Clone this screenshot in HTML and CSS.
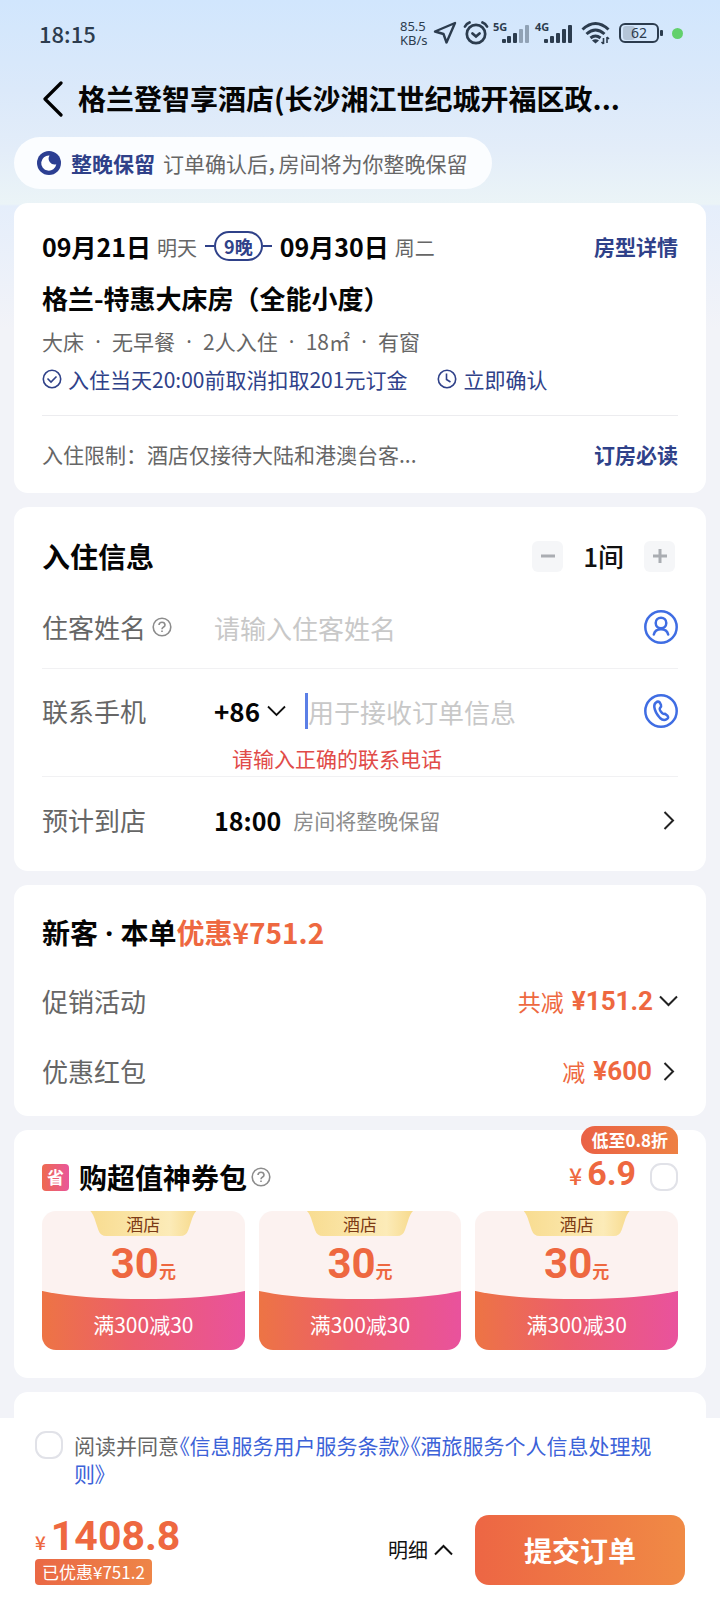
FILE: index.html
```html
<!DOCTYPE html>
<html lang="zh-CN">
<head>
<meta charset="utf-8">
<meta name="viewport" content="width=device-width, initial-scale=1">
<title>提交订单</title>
<link rel="stylesheet" href="styles.css">
</head>
<body>
<div class="statusbar">
  <span class="clock">18:15</span>
  <div class="indicators">
    <span class="speed"><span>85.5</span><span>KB/s</span></span>
    <svg width="24" height="24" viewBox="0 0 24 24" fill="none" stroke="#2c3c4e" stroke-width="2.4" stroke-linejoin="round"><path d="M22 2 13.500 21.500 10.500 13 2 10.500Z"/></svg>
    <svg class="alarm" width="26" height="24" viewBox="0 0 26 24" fill="none" stroke="#2c3c4e" stroke-width="2.700" stroke-linecap="round"><circle cx="13" cy="13" r="9.200"/><path d="M9.500 12.500l3.500 3 3.500-3M2 5.500Q3.500 2.500 6.500 1.500M24 5.500Q22.500 2.500 19.500 1.500"/></svg>
    <svg class="signal" width="38" height="24" viewBox="0 0 38 24" fill="#2c3c4e"><text class="net" x="0" y="10">5G</text><rect x="9" y="18" width="4" height="4" rx="1"/><rect x="14" y="15" width="4" height="7" rx="1"/><rect x="20" y="12" width="4" height="10" rx="1"/><g opacity=".4"><rect x="26" y="8" width="4" height="14" rx="1"/><rect x="32" y="4" width="4" height="18" rx="1"/></g></svg>
    <svg class="signal" width="38" height="24" viewBox="0 0 38 24" fill="#2c3c4e"><text class="net" x="0" y="10">4G</text><rect x="9" y="18" width="4" height="4" rx="1"/><rect x="15" y="15" width="4" height="7" rx="1"/><rect x="21" y="12" width="4" height="10" rx="1"/><rect x="27" y="8" width="4" height="14" rx="1"/><rect x="33" y="4" width="4" height="18" rx="1"/></svg>
    <svg class="wifi" width="30" height="24" viewBox="0 0 30 24" fill="none" stroke="#2c3c4e" stroke-width="3"><path d="M1.500 8.500Q14.500-3.500 27.500 8.500M5.500 13Q14.500 5 23.500 13M9.500 17Q14.500 13 19.500 17"/><path d="M14.500 22.500 11 19.500Q14.500 17 18 19.500Z" fill="#2c3c4e" stroke="none"/><path d="M22.500 17v6M22.500 23l-2-2M26 22v-6M26 16l2 2" stroke-width="1.600"/></svg>
    <svg class="battery" width="44" height="20" viewBox="0 0 44 20"><rect x="4" y="3" width="12" height="14" rx="3" fill="#b4c5d8"/><rect x="1" y="1" width="38" height="18" rx="5" fill="none" stroke="#2c3c4e" stroke-width="2"/><rect x="41" y="7" width="3" height="6" rx="1" fill="#2c3c4e"/><text class="charge" x="20" y="15" text-anchor="middle">62</text></svg>
    <span class="live"></span>
  </div>
</div>

<header class="titlebar">
  <button class="back" type="button" aria-label="返回"><svg width="22" height="36" viewBox="0 0 22 36" fill="none" stroke="#000" stroke-width="3.200" stroke-linecap="round" stroke-linejoin="round"><path d="M19 2 3 18 19 34"/></svg></button>
  <h1>格兰登智享酒店(长沙湘江世纪城开福区政...</h1>
</header>

<main>
  <div class="notice">
    <svg width="24" height="24" viewBox="0 0 24 24"><circle cx="12" cy="12" r="12" fill="#2c3f92"/><path d="M12.500 4.500A6 6 0 0 0 19.300 13.300 7.600 7.600 0 1 1 12.500 4.500Z" fill="#fff"/></svg>
    <strong>整晚保留</strong><span>订单确认后，房间将为你整晚保留</span>
  </div>

  <section class="card stay">
    <div class="dates">
      <b>09月21日</b><span class="day">明天</span>
      <span class="nights"><span>9晚</span></span>
      <b>09月30日</b><span class="day">周二</span>
      <a class="more" href="#room">房型详情</a>
    </div>
    <h2 class="room">格兰-特惠大床房（全能小度）</h2>
    <div class="facts"><span>大床</span><i>·</i><span>无早餐</span><i>·</i><span>2人入住</span><i>·</i><span>18㎡</span><i>·</i><span>有窗</span></div>
    <div class="policies">
      <span><svg width="20" height="20" viewBox="0 0 20 20" fill="none" stroke="#2f4189" stroke-width="1.600"><circle cx="10" cy="10" r="8.700"/><path d="M5.500 9.500 9 13l5.500-5.500"/></svg>入住当天20:00前取消扣取201元订金</span>
      <span><svg width="20" height="20" viewBox="0 0 20 20" fill="none" stroke="#2f4189" stroke-width="1.600"><circle cx="10" cy="10" r="8.700"/><path d="M9.500 4.500V10.500L13.500 13"/></svg>立即确认</span>
    </div>
    <div class="limits"><span>入住限制：酒店仅接待大陆和港澳台客...</span><a class="more" href="#rules">订房必读</a></div>
  </section>

  <section class="card guest">
    <div class="guest-head">
      <h2>入住信息</h2>
      <div class="stepper">
        <button type="button" aria-label="减少"><svg width="14" height="14" viewBox="0 0 14 14" stroke="#aaadb2" stroke-width="3"><path d="M0 7h14"/></svg></button>
        <output>1间</output>
        <button type="button" aria-label="增加"><svg width="14" height="14" viewBox="0 0 14 14" stroke="#aaadb2" stroke-width="3"><path d="M0 7h14M7 0v14"/></svg></button>
      </div>
    </div>
    <div class="field">
      <label for="guest">住客姓名<svg class="help" width="20" height="20" viewBox="0 0 20 20" fill="none" stroke="#8c8c8c" stroke-width="1.600"><circle cx="10" cy="10" r="8.800"/><path d="M7 8Q7.200 5.200 10 5.200T13 7.900Q13 9.300 11.300 10.200 10 10.900 10 12.200M10 13.400V15"/></svg></label>
      <input id="guest" type="text" placeholder="请输入住客姓名">
      <button class="pick" type="button" aria-label="选择住客"><svg width="34" height="34" viewBox="0 0 34 34" fill="none" stroke="#3f6de3" stroke-width="2.500" stroke-linecap="round"><circle cx="17" cy="17" r="15.700"/><circle cx="17" cy="13" r="5.300"/><path d="M9.800 24.500Q11 19.300 17 19.300T24.200 24.500"/></svg></button>
    </div>
    <div class="phone">
      <div class="field-main">
        <label for="phone">联系手机</label>
        <button class="code" type="button">+86<svg width="19" height="12" viewBox="0 0 19 12" fill="none" stroke="#111" stroke-width="1.800"><path d="M1 1.500 9.500 10 18 1.500"/></svg></button>
        <span class="caret"></span>
        <input id="phone" type="tel" placeholder="用于接收订单信息">
        <button class="pick" type="button" aria-label="通讯录"><svg width="34" height="34" viewBox="0 0 34 34" fill="none" stroke="#3f6de3" stroke-width="2.500" stroke-linejoin="round"><circle cx="17" cy="17" r="15.700"/><path d="M12 8.500Q14 6.800 15.800 8.500L17 11Q17.600 12.500 16 14 14.800 15.500 18.200 19.200 19.300 20.300 21 19.800L23.500 21.800Q25 23.800 23 25 19.500 27.300 16 24 11 18.500 10.300 13 10 10 12 8.500Z"/></svg></button>
      </div>
      <p class="error">请输入正确的联系电话</p>
    </div>
    <div class="arrival">
      <span class="label">预计到店</span><b>18:00</b><span class="hint">房间将整晚保留</span>
      <svg class="go" width="12" height="19" viewBox="0 0 12 19" fill="none" stroke="#222" stroke-width="2"><path d="M1.500 1 10 9.500 1.500 18"/></svg>
    </div>
  </section>

  <section class="card promo">
    <h2>新客<i> · </i>本单<em>优惠¥751.2</em></h2>
    <div class="line"><span class="label">促销活动</span><span class="cut">共减</span><b>¥151.2</b><svg width="19" height="12" viewBox="0 0 19 12" fill="none" stroke="#222" stroke-width="2"><path d="M1 1.500 9.500 10 18 1.500"/></svg></div>
    <div class="line"><span class="label">优惠红包</span><span class="cut">减</span><b>¥600</b><svg class="side" width="12" height="19" viewBox="0 0 12 19" fill="none" stroke="#222" stroke-width="2"><path d="M1.500 1 10 9.500 1.500 18"/></svg></div>
  </section>

  <section class="card pack">
    <span class="sale">低至0.8折</span>
    <div class="pack-head">
      <span class="save">省</span>
      <h2>购超值神券包</h2>
      <svg class="help" width="20" height="20" viewBox="0 0 20 20" fill="none" stroke="#8c8c8c" stroke-width="1.600"><circle cx="10" cy="10" r="8.800"/><path d="M7 8Q7.200 5.200 10 5.200T13 7.900Q13 9.300 11.300 10.200 10 10.900 10 12.200M10 13.400V15"/></svg>
      <span class="price"><small>¥</small>6.9</span>
      <input class="tick" type="checkbox" aria-label="购超值神券包">
    </div>
    <div class="coupons">
      <div class="coupon">
        <span class="kind">酒店</span>
        <span class="amount">30<small>元</small></span>
        <span class="rule">满300减30</span>
      </div>
      <div class="coupon">
        <span class="kind">酒店</span>
        <span class="amount">30<small>元</small></span>
        <span class="rule">满300减30</span>
      </div>
      <div class="coupon">
        <span class="kind">酒店</span>
        <span class="amount">30<small>元</small></span>
        <span class="rule">满300减30</span>
      </div>
    </div>
  </section>

  <section class="card next"></section>
</main>

<footer class="checkout">
  <div class="agree">
    <input class="tick" id="agree" type="checkbox">
    <label for="agree">阅读并同意<a href="#terms">《信息服务用户服务条款》</a><a href="#privacy">《酒旅服务个人信息处理规则》</a></label>
  </div>
  <div class="pay">
    <div class="total">
      <span class="sum"><small>¥</small>1408.8</span>
      <span class="saved">已优惠¥751.2</span>
    </div>
    <button class="detail" type="button">明细<svg width="19" height="12" viewBox="0 0 19 12" fill="none" stroke="#111" stroke-width="2"><path d="M1 10.500 9.500 2 18 10.500"/></svg></button>
    <button class="submit" type="button">提交订单</button>
  </div>
</footer>
</body>
</html>
```
FILE: styles.css
```css
* { box-sizing: border-box; }
body {
  margin: 0;
  min-height: 100vh;
  display: flex;
  flex-direction: column;
  font-family: "Noto Sans CJK SC", sans-serif;
  font-size: 21px;
  line-height: 28px;
  color: #666;
  background: #f2f3f8 linear-gradient(#d1e6fd 0, #dbe9fa 90px, #e3edf9 150px, #ebf4f7 204px, #e5eefb 206px, #f2f3f8 330px) no-repeat;
}
h1, h2, p { margin: 0; }
h1, h2 { color: #050505; }
h2 { font-size: 28px; line-height: 40px; }
svg { display: block; flex: none; }
button {
  margin: 0;
  padding: 0;
  border: 0;
  background: none;
  font: inherit;
  color: inherit;
}
a { color: inherit; text-decoration: none; }
input[type="text"], input[type="tel"] {
  flex: 1;
  min-width: 0;
  padding: 0;
  border: 0;
  outline: 0;
  background: none;
  font: inherit;
  font-size: 26px;
  height: 40px;
}
input::placeholder { color: #c8c8c8; opacity: 1; }

.statusbar {
  height: 66px;
  padding: 0 37px 0 39px;
  display: flex;
  align-items: center;
  justify-content: space-between;
  color: #2c3c4e;
}
.clock { font-size: 22px; font-weight: 500; }
.indicators { display: flex; align-items: center; }
.speed {
  display: flex;
  flex-direction: column;
  width: 33px;
  font-family: "Noto Sans", sans-serif;
  font-size: 13px;
  line-height: 14px;
}
.alarm { margin-left: 6px; }
.signal { margin-left: 4px; overflow: visible; }
.net { font: bold 11px "Noto Sans", sans-serif; }
.wifi { margin-left: 8px; }
.battery { margin-left: 8px; }
.charge { font: 14px "Noto Sans", sans-serif; fill: #2c3c4e; }
.live {
  width: 11px;
  height: 11px;
  margin-left: 9px;
  border-radius: 50%;
  background: #62d06c;
}

.titlebar {
  height: 66px;
  padding: 0 42px;
  display: flex;
  align-items: center;
  gap: 14px;
}
h1 { font-size: 28px; line-height: 40px; padding-bottom: 2px; white-space: nowrap; }

main { flex: 1; padding: 5px 14px 0; }
.notice {
  width: fit-content;
  height: 52px;
  margin-bottom: 14px;
  padding: 0 24px 0 23px;
  border-radius: 26px;
  background: #fbfdff;
  display: flex;
  align-items: center;
}
.notice strong { margin: 0 8px 0 10px; color: #2f4189; }
.notice span { font-feature-settings: "palt"; }

.card {
  margin-bottom: 14px;
  padding: 0 28px;
  border-radius: 14px;
  background: #fff;
}
.more { margin-left: auto; font-weight: bold; color: #2f4189; }

.stay { padding-top: 26px; padding-bottom: 25px; }
.dates { display: flex; align-items: center; height: 34px; }
.dates b { font-size: 25px; color: #050505; }
.day { margin-left: 6px; padding-top: 3px; font-size: 20px; }
.nights { display: flex; align-items: center; margin: 0 8px; color: #2f4189; }
.nights::before, .nights::after {
  content: "";
  width: 9px;
  height: 2px;
  background: #2f4189;
}
.nights span {
  height: 30px;
  padding: 0 8px;
  border: 2px solid #2f4189;
  border-radius: 15px;
  font-size: 18px;
  font-weight: bold;
  line-height: 26px;
}
.room { margin-top: 17px; font-size: 26px; line-height: 36px; }
.facts { display: flex; margin-top: 11px; }
.facts i {
  width: 28px;
  font-family: "Noto Sans", sans-serif;
  font-style: normal;
  text-align: center;
}
.policies { display: flex; gap: 30px; margin: 10px 0 22px; color: #2f4189; }
.policies span { display: flex; align-items: center; gap: 6px; }
.limits { display: flex; padding-top: 24px; border-top: 1px solid #ececef; }

.guest { padding-top: 19px; padding-bottom: 8px; }
.guest-head { display: flex; align-items: center; justify-content: space-between; height: 60px; }
.stepper { display: flex; align-items: center; gap: 20px; margin-right: 3px; }
.stepper button {
  width: 31px;
  height: 31px;
  border-radius: 6px;
  background: #f5f6f8;
  display: grid;
  place-items: center;
}
.stepper output { font-size: 26px; font-weight: 500; color: #111; }
.field { display: flex; align-items: center; height: 83px; border-bottom: 1px solid #f1f1f3; }
.guest label, .label { width: 172px; font-size: 26px; }
.guest label { display: flex; align-items: center; gap: 6px; }
.phone { padding: 14px 0 4px; border-bottom: 1px solid #f1f1f3; }
.field-main { display: flex; align-items: center; height: 56px; }
.code { display: flex; align-items: center; gap: 7px; font-size: 26px; font-weight: bold; color: #050505; }
.caret { width: 3px; height: 36px; margin-left: 19px; background: #5b7fe6; }
.error { margin: 5px 0 0 190px; color: #e14b48; }
.arrival { display: flex; align-items: center; height: 86px; }
.arrival b { margin-right: 12px; font-size: 25px; color: #050505; }
.hint { color: #8c8c8c; }
.go { margin: 0 3px 0 auto; }

.promo { padding-top: 27px; padding-bottom: 10px; }
.promo h2 { height: 40px; margin-bottom: 14px; }
.promo h2 i { font-family: "Noto Sans", sans-serif; font-style: normal; }
.promo em { font-style: normal; color: #ee6840; }
.line { display: flex; align-items: center; height: 70px; color: #ee6840; }
.line .label { margin-right: auto; color: #666; }
.cut { margin-right: 8px; font-size: 23px; }
.line b { margin-right: 6px; font: bold 26px/36px Roboto, sans-serif; }
.line .side { margin: 0 3px 0 5px; }

.pack { position: relative; padding-top: 27px; padding-bottom: 28px; }
.sale {
  position: absolute;
  top: -4px;
  right: 28px;
  padding: 0 10px;
  border-radius: 14px 14px 0 14px;
  background: linear-gradient(90deg, #ea6145, #ee8043);
  color: #fff;
  font-size: 17px;
  font-weight: bold;
}
.pack-head { display: flex; align-items: center; height: 40px; margin-bottom: 14px; }
.pack-head h2 { margin: 0 4px 0 10px; }
.save {
  width: 27px;
  height: 27px;
  border-radius: 4px;
  background: linear-gradient(90deg, #ee6a50, #e9569a);
  color: #fff;
  font-size: 17px;
  font-weight: bold;
  line-height: 26px;
  text-align: center;
}
.price { margin: 0 14px 8px auto; font: bold 34px/36px Roboto, sans-serif; color: #ee6840; }
.price small, .sum small { margin-right: 5px; font: 500 23px "Noto Sans CJK SC", sans-serif; }
.tick {
  appearance: none;
  flex: none;
  width: 28px;
  height: 28px;
  margin: 0;
  border: 2px solid #e1e2e8;
  border-radius: 11px;
  background: #fff;
}
.coupons { display: grid; grid-template-columns: repeat(3, 1fr); gap: 14px; }
.coupon {
  position: relative;
  overflow: hidden;
  display: flex;
  flex-direction: column;
  align-items: center;
  height: 139px;
  border-radius: 14px;
  background:
    linear-gradient(#fcf2f0, #fcf2f0) top / calc(100% + 2px) 60px no-repeat,
    linear-gradient(90deg, #ed7444, #ec5e6c 45%, #e9529d);
}
.coupon::before {
  content: "";
  position: absolute;
  inset: 20px -10% auto;
  height: 68px;
  border-radius: 0 0 50% 50% / 0 0 18px 18px;
  background: #fcf2f0;
}
.coupon span { position: relative; }
.kind {
  width: 106px;
  height: 25px;
  font-size: 17px;
  line-height: 25px;
  text-align: center;
  color: #7c3a14;
  background: linear-gradient(90deg, #f8dc90, #fcebb8 75%, #f7da8c);
  clip-path: path("M0 0H106Q103 3 101 10L98 19Q96 25 90 25H16Q10 25 8 19L5 10Q3 3 0 0Z");
}
.amount { margin-top: 5px; font: bold 42px/46px Roboto, sans-serif; color: #ee6840; }
.amount small { font: bold 17px "Noto Sans CJK SC", sans-serif; }
.rule { margin-top: 23px; color: #fff; }
.next { min-height: 26px; margin: 0; border-radius: 14px 14px 0 0; }

.checkout { padding: 13px 35px 15px; background: #fff; }
.agree { display: flex; gap: 11px; margin-bottom: 28px; padding-right: 10px; }
.agree a { color: #3c62d8; font-feature-settings: "palt"; }
.pay { display: flex; align-items: center; }
.total { display: flex; flex-direction: column; align-items: flex-start; gap: 2px; margin-right: auto; }
.sum { font: bold 41px/42px Roboto, sans-serif; color: #ee6840; }
.sum small { font-size: 19px; }
.saved {
  height: 26px;
  padding: 0 7px;
  border-radius: 4px;
  background: linear-gradient(90deg, #ea6845, #ee8547);
  color: #fff;
  font-size: 17px;
  line-height: 26px;
}
.detail { display: flex; align-items: center; gap: 6px; margin-right: 22px; font-size: 20px; color: #111; }
.submit {
  width: 210px;
  height: 70px;
  border-radius: 14px;
  background: linear-gradient(90deg, #ed6644, #f08a45);
  color: #fff;
  font-size: 28px;
  font-weight: bold;
}
```
